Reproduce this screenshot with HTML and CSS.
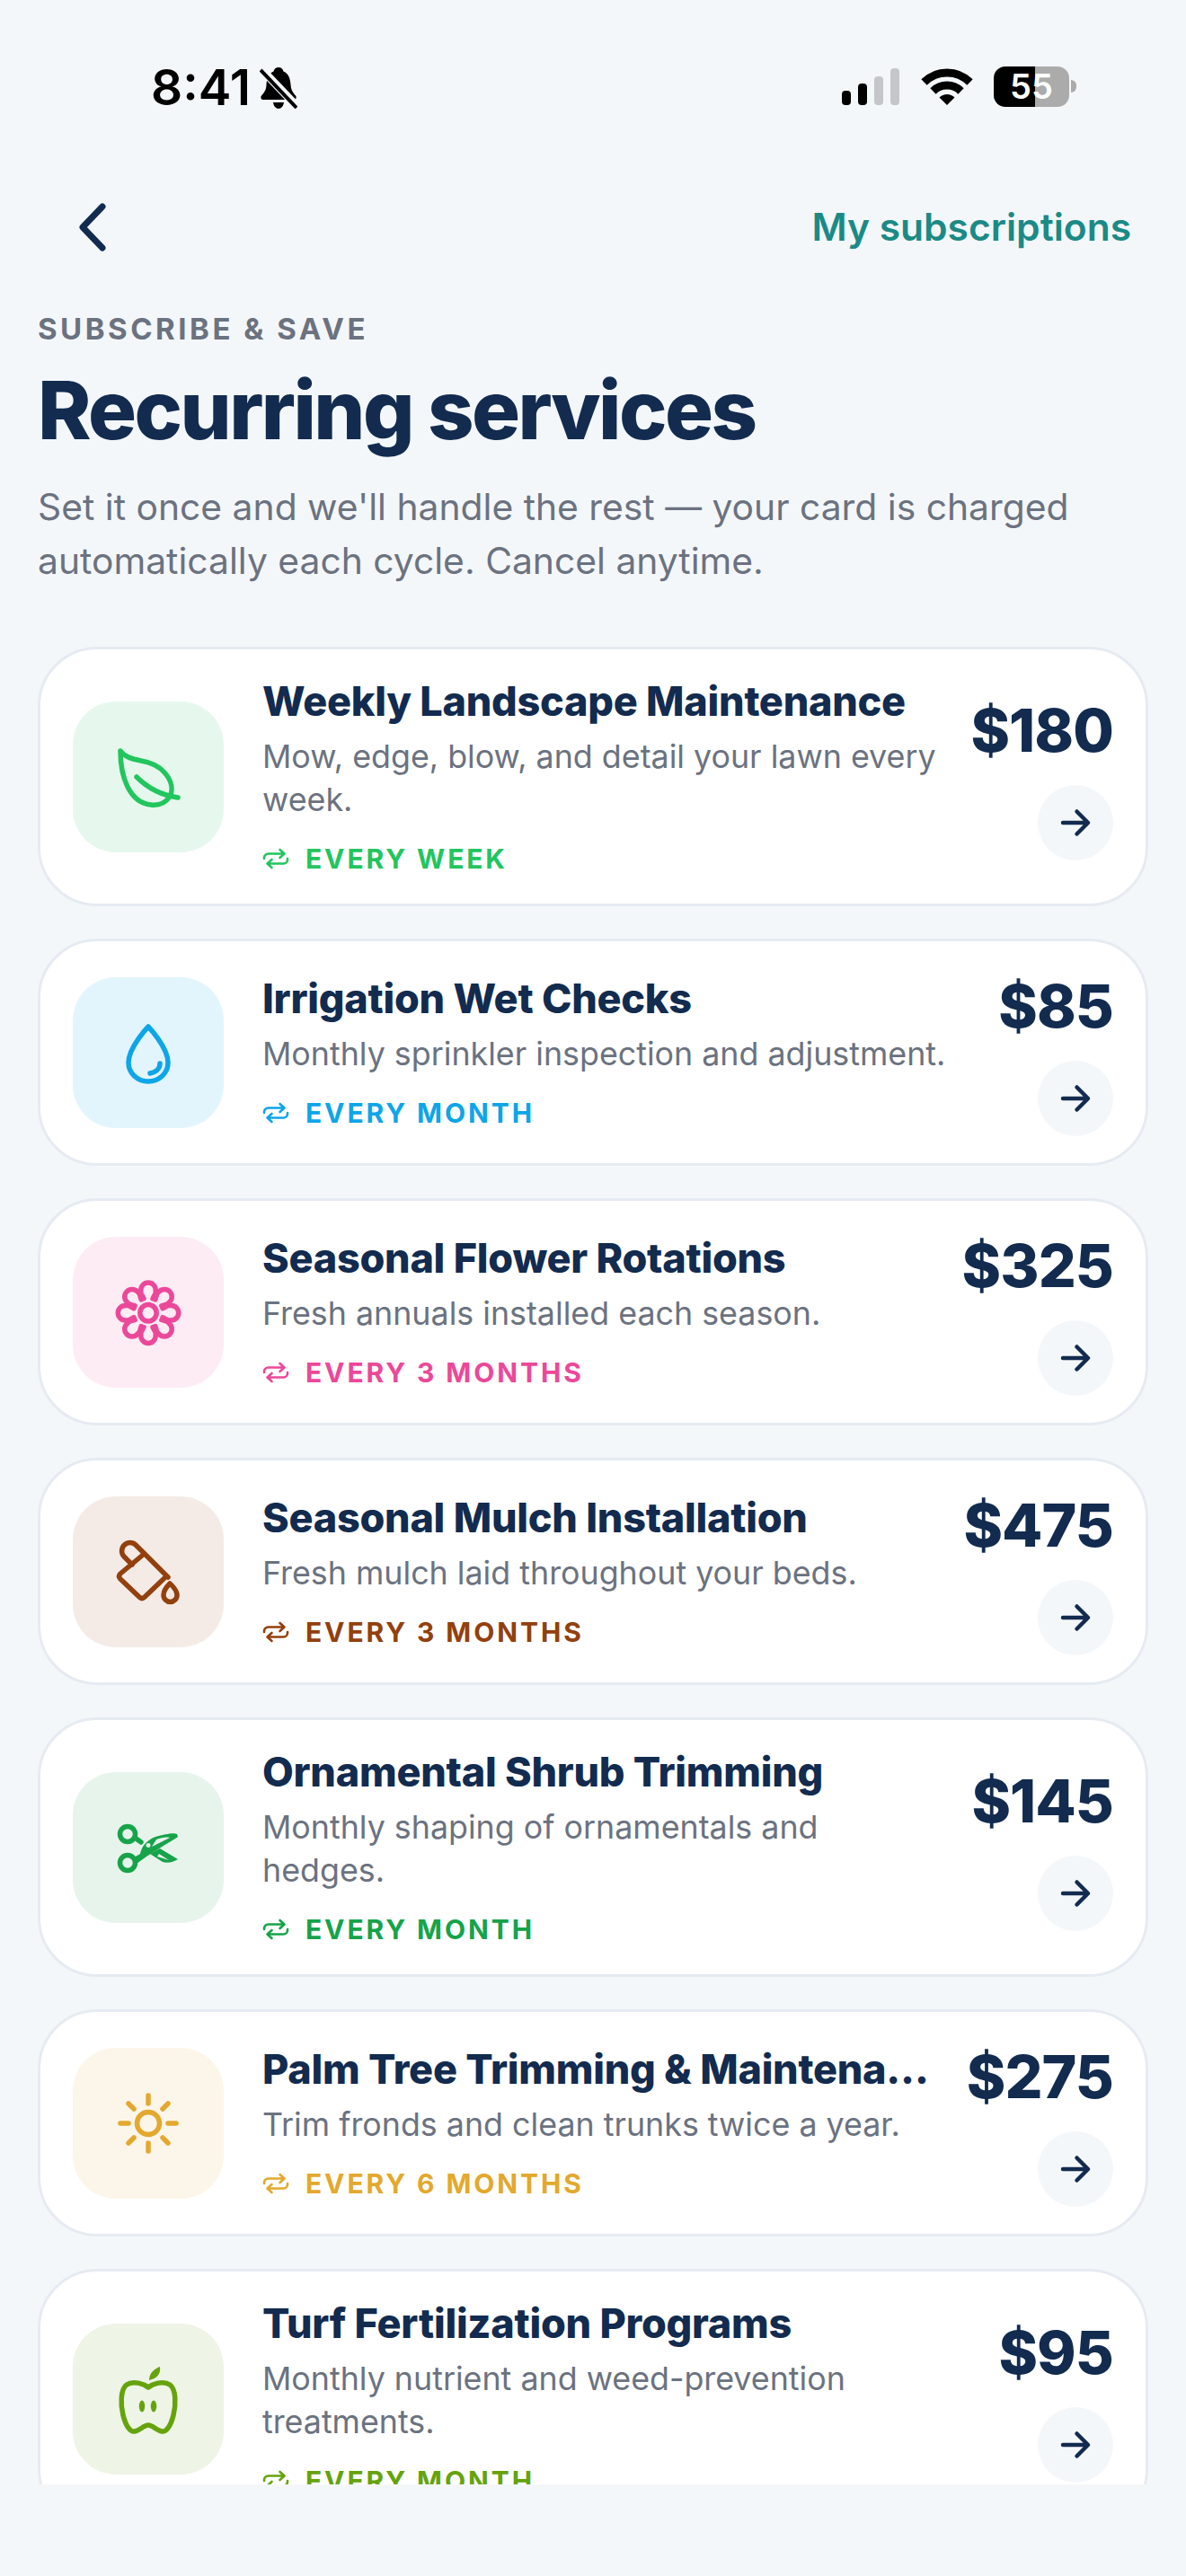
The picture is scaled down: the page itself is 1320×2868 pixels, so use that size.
FILE: index.html
```html
<!DOCTYPE html>
<html lang="en">
<head>
<meta charset="utf-8">
<title>Recurring services</title>
<link rel="stylesheet" href="styles.css">
</head>
<body>
<svg class="defs" width="0" height="0" aria-hidden="true">
  <defs>
    <g id="repeat"><path d="M2 12V11a4.500 4.500 0 0 1 4.500-4.500H24M19.500 2l5 4.500-5 4.500M28 12v1a4.500 4.500 0 0 1-4.500 4.500H6M10.500 13l-5 4.500 5 4.500"/></g>
    <g id="arrow"><path d="M7 21h27M22.500 8.500 35 21 22.500 33.500"/></g>
    <path id="petal" d="M-5-16-8.200-22V-25.500A8.200 8.200 0 0 1 8.200-25.500V-22L5-16"/>
  </defs>
</svg>
<div class="page">
  <div class="status">
    <div class="status-left">
      <span class="time">8:41</span>
      <svg class="bell" viewBox="0 0 42 46" width="42" height="46"><path class="bell-body" d="M21 0c3 0 5 2 5.500 4.500C32 7 34 12 34.500 19c.3 6 2.500 9 5.500 12.500 1.500 2 .5 4.500-2 4.500H4c-2.500 0-3.500-2.500-2-4.500C5 28 7.500 25 7.500 19 8 12 10 7 15.500 4.500 16 2 18 0 21 0ZM15 39h12c-.5 4-3 7-6 7s-5.500-3-6-7Z"/><path class="bell-gap" d="M0 0 42 44"/><path class="bell-slash" d="M1 3 41 45"/></svg>
    </div>
    <div class="status-right">
      <div class="signal"><i class="b1"></i><i class="b2"></i><i class="b3"></i><i class="b4"></i></div>
      <svg class="wifi" viewBox="0 0 58 41" width="58" height="41"><path d="M3.500 15.500A36 36 0 0 1 54.500 15.500M13.500 25.500A22 22 0 0 1 44.500 25.500" fill="none" stroke="#000" stroke-width="9"/><path d="M29 41 20.500 32.500A12 12 0 0 1 37.500 32.500Z" fill="#000"/></svg>
      <div class="battery"><span class="battery-level">55</span><i class="battery-nub"></i></div>
    </div>
  </div>

  <div class="nav">
    <svg class="back" viewBox="0 0 32 54" width="32" height="54"><path d="M28 4 6 27l22 23"/></svg>
    <a class="nav-link">My subscriptions</a>
  </div>

  <header class="head">
    <div class="eyebrow">SUBSCRIBE &amp; SAVE</div>
    <h1 class="title">Recurring services</h1>
    <p class="lede">Set it once and we'll handle the rest — your card is charged automatically each cycle. Cancel anytime.</p>
  </header>

  <main class="list">
    <article class="card c-green">
      <div class="tile"><svg class="ico" viewBox="0 0 168 168"><path d="M53 55C58 62 66 64 76 66 88 68 96 72 102 79 110 88 112 98 108 106 103 113 95 116 87 115 76 114 67 107 61 95 55 83 53 68 53 55Z"/><path d="M71 84C82 95 96 104 117 107"/></svg></div>
      <div class="body">
        <h2 class="name">Weekly Landscape Maintenance</h2>
        <p class="desc">Mow, edge, blow, and detail your lawn every week.</p>
        <div class="freq"><svg class="rep" viewBox="0 0 30 24"><use href="#repeat"/></svg><span>EVERY WEEK</span></div>
      </div>
      <div class="side"><div class="price">$180</div><div class="go"><svg viewBox="0 0 42 42"><use href="#arrow"/></svg></div></div>
    </article>

    <article class="card c-blue">
      <div class="tile"><svg class="ico" viewBox="0 0 168 168"><path d="M84 55C84 55 62 78 62 95 62 107 72 116 84 116 96 116 106 107 106 95 106 78 84 55 84 55Z"/><path d="M97 96C97 102 92 106 86 107"/></svg></div>
      <div class="body">
        <h2 class="name">Irrigation Wet Checks</h2>
        <p class="desc">Monthly sprinkler inspection and adjustment.</p>
        <div class="freq"><svg class="rep" viewBox="0 0 30 24"><use href="#repeat"/></svg><span>EVERY MONTH</span></div>
      </div>
      <div class="side"><div class="price">$85</div><div class="go"><svg viewBox="0 0 42 42"><use href="#arrow"/></svg></div></div>
    </article>

    <article class="card c-pink">
      <div class="tile"><svg class="ico" viewBox="0 0 168 168"><g transform="translate(84 84.700)"><circle r="9.200"/><use href="#petal"/><use href="#petal" transform="rotate(45)"/><use href="#petal" transform="rotate(90)"/><use href="#petal" transform="rotate(135)"/><use href="#petal" transform="rotate(180)"/><use href="#petal" transform="rotate(225)"/><use href="#petal" transform="rotate(270)"/><use href="#petal" transform="rotate(315)"/></g></svg></div>
      <div class="body">
        <h2 class="name">Seasonal Flower Rotations</h2>
        <p class="desc">Fresh annuals installed each season.</p>
        <div class="freq"><svg class="rep" viewBox="0 0 30 24"><use href="#repeat"/></svg><span>EVERY 3 MONTHS</span></div>
      </div>
      <div class="side"><div class="price">$325</div><div class="go"><svg viewBox="0 0 42 42"><use href="#arrow"/></svg></div></div>
    </article>

    <article class="card c-brown">
      <div class="tile"><svg class="ico" viewBox="0 0 168 168"><path d="M106 90 70 54A9.200 9.200 0 0 0 57 67L66 76"/><path d="M77 66 53 86Q50 89 53 92L74 112Q77 115 80 112L102 91"/><path d="M108 97C108 97 101 104 101 110A7.500 7.500 0 0 0 116 110C116 104 108 97 108 97Z"/></svg></div>
      <div class="body">
        <h2 class="name">Seasonal Mulch Installation</h2>
        <p class="desc">Fresh mulch laid throughout your beds.</p>
        <div class="freq"><svg class="rep" viewBox="0 0 30 24"><use href="#repeat"/></svg><span>EVERY 3 MONTHS</span></div>
      </div>
      <div class="side"><div class="price">$475</div><div class="go"><svg viewBox="0 0 42 42"><use href="#arrow"/></svg></div></div>
    </article>

    <article class="card c-forest">
      <div class="tile"><svg class="ico" viewBox="0 0 168 168"><circle cx="61" cy="69" r="8.500"/><circle cx="61" cy="101" r="8.500"/><path d="M69 73 76 78"/><path class="solid" fill-rule="evenodd" d="M68 95 75 91C77 82 82 76 92 72 102 69 113 67 116 69L117 72C105 80 85 91 71 102ZM93 75 88 83 96 79 108 73C104 72 98 73 93 75ZM84 79A2.500 2.500 0 1 0 84.100 79Z"/><path class="solid" fill-rule="evenodd" d="M86 91 97 85 117 97C112 100 106 102 100 100ZM96 91 94 94 107 98Z"/></svg></div>
      <div class="body">
        <h2 class="name">Ornamental Shrub Trimming</h2>
        <p class="desc">Monthly shaping of ornamentals and hedges.</p>
        <div class="freq"><svg class="rep" viewBox="0 0 30 24"><use href="#repeat"/></svg><span>EVERY MONTH</span></div>
      </div>
      <div class="side"><div class="price">$145</div><div class="go"><svg viewBox="0 0 42 42"><use href="#arrow"/></svg></div></div>
    </article>

    <article class="card c-gold">
      <div class="tile"><svg class="ico" viewBox="0 0 168 168"><circle cx="84" cy="84" r="12.500"/><path d="M84 53v9M84 106v9M53 84h9M106 84h9M62 62l6 6M100 100l6 6M62 106l6-6M100 68l6-6"/></svg></div>
      <div class="body">
        <h2 class="name">Palm Tree Trimming &amp; Maintenance Program</h2>
        <p class="desc">Trim fronds and clean trunks twice a year.</p>
        <div class="freq"><svg class="rep" viewBox="0 0 30 24"><use href="#repeat"/></svg><span>EVERY 6 MONTHS</span></div>
      </div>
      <div class="side"><div class="price">$275</div><div class="go"><svg viewBox="0 0 42 42"><use href="#arrow"/></svg></div></div>
    </article>

    <article class="card c-olive">
      <div class="tile"><svg class="ico" viewBox="0 0 168 168"><path d="M84 71C79 67 67 63 60 68 53 73 53 90 56 102 59 114 64 121 69 120 75 119 79 113 84 113 89 113 93 119 99 120 104 121 109 114 112 102 115 90 115 73 108 68 101 63 89 67 84 71Z"/><ellipse class="solid" cx="77" cy="92" rx="3.200" ry="6.500"/><ellipse class="solid" cx="90" cy="92" rx="3.200" ry="6.500"/><path class="solid" d="M85 63C85 54 92 50 97 48 98 56 94 61 85 63Z"/></svg></div>
      <div class="body">
        <h2 class="name">Turf Fertilization Programs</h2>
        <p class="desc">Monthly nutrient and weed-prevention treatments.</p>
        <div class="freq"><svg class="rep" viewBox="0 0 30 24"><use href="#repeat"/></svg><span>EVERY MONTH</span></div>
      </div>
      <div class="side"><div class="price">$95</div><div class="go"><svg viewBox="0 0 42 42"><use href="#arrow"/></svg></div></div>
    </article>
  </main>
  <div class="foot"></div>
</div>
</body>
</html>
```

FILE: styles.css
```css
* { box-sizing: border-box; }
html, body { margin: 0; padding: 0; }
body { background: #f4f7fa; font-family: "Inter", "Liberation Sans", sans-serif; color: #122b4f; }
.defs { position: absolute; }
.page { height: 2868px; display: flex; flex-direction: column; overflow: hidden; }

.status { height: 198px; padding: 74px 130px 0 168px; display: flex; justify-content: space-between; align-items: flex-start; color: #000; }
.status-left { display: flex; align-items: center; gap: 10px; height: 47px; }
.time { font-size: 55px; line-height: 47px; font-weight: 600; letter-spacing: 0; }
.bell { display: block; }
.bell-body { fill: #000; }
.bell-gap { stroke: #f4f7fa; stroke-width: 9; }
.bell-slash { stroke: #000; stroke-width: 4; }
.status-right { display: flex; align-items: flex-start; gap: 0; }
.signal { display: flex; align-items: flex-end; gap: 8px; width: 65px; height: 41px; margin: 2px 23px 0 0; }
.signal i { display: block; width: 10px; border-radius: 4px; background: #000; }
.signal .b1 { height: 16px; }
.signal .b2 { height: 24px; }
.signal .b3 { height: 32px; background: #c4c6ca; }
.signal .b4 { height: 41px; background: #c4c6ca; }
.wifi { display: block; margin: 2px 23px 0 0; }
.battery { position: relative; width: 84px; height: 45px; border-radius: 13px; background: linear-gradient(90deg, #000 0 46px, #ababab 46px); display: flex; align-items: center; justify-content: center; }
.battery-level { color: #fff; font-size: 38px; line-height: 45px; font-weight: 600; }
.battery-nub { position: absolute; left: 86px; top: 15px; width: 6px; height: 14px; border-radius: 0 6px 6px 0; background: #ababab; }

.nav { height: 116px; padding: 0 61px 0 86px; display: flex; justify-content: space-between; align-items: center; }
.back { display: block; margin-top: -6px; }
.back path { fill: none; stroke: #122b4f; stroke-width: 7; stroke-linecap: round; stroke-linejoin: round; }
.nav-link { font-size: 42.500px; line-height: 60px; font-weight: 600; color: #1b8a86; margin-top: -6px; }

.head { padding: 0 42px; margin-top: 31px; }
.eyebrow { font-size: 33px; line-height: 42px; font-weight: 700; letter-spacing: 3.500px; color: #6b7280; }
.title { margin: 19px 0 0; font-size: 90px; line-height: 102px; font-weight: 800; letter-spacing: -2.550px; color: #122b4f; }
.lede { margin: 26px 0 0; font-size: 40.800px; line-height: 60px; color: #6b7280; }

.list { flex: 1 1 0; min-height: 0; overflow: hidden; padding: 0 42px; margin-top: 66px; display: flex; flex-direction: column; gap: 36px; }
.foot { flex: 0 0 102px; }

.card { flex: none; display: flex; align-items: center; gap: 43px; padding: 33px 36px; background: #fff; border: 3px solid #e6ebf2; border-radius: 66px; }
.tile { flex: none; width: 168px; height: 168px; border-radius: 48px; display: flex; align-items: center; justify-content: center; }
.ico { display: block; width: 168px; height: 168px; fill: none; stroke: currentColor; stroke-width: 5.500; stroke-linecap: round; stroke-linejoin: round; }
.ico use { stroke: currentColor; }
.ico .solid { fill: currentColor; stroke: none; }
.body { flex: 1 1 0; min-width: 0; }
.name { margin: -4px 0; font-size: 45px; line-height: 58px; font-weight: 800; letter-spacing: -0.250px; color: #122b4f; white-space: nowrap; overflow: hidden; text-overflow: ellipsis; }
.desc { margin: 12px 0 0; font-size: 35.800px; line-height: 48px; color: #6b7280; }
.freq { margin-top: 25px; height: 34px; display: flex; align-items: center; gap: 18px; font-size: 30px; line-height: 34px; font-weight: 700; letter-spacing: 2.900px; color: currentColor; }
.rep { flex: none; display: block; width: 30px; height: 24px; fill: none; stroke: currentColor; stroke-width: 2.600; stroke-linecap: round; stroke-linejoin: round; }
.side { flex: none; display: flex; flex-direction: column; align-items: flex-end; gap: 21px; margin: 0 0 -3px -8px; }
.price { font-size: 66px; line-height: 79px; font-weight: 800; letter-spacing: -0.900px; color: #122b4f; }
.go { width: 84px; height: 84px; border-radius: 50%; background: #f4f7fa; display: flex; align-items: center; justify-content: center; }
.go svg { display: block; width: 42px; height: 42px; fill: none; stroke: #122b4f; stroke-width: 4.500; stroke-linecap: round; stroke-linejoin: round; }

.c-green { color: #22c55e; } .c-green .tile { background: #e6f8ed; }
.c-blue { color: #0ea5e9; } .c-blue .tile { background: #e3f5fc; }
.c-pink { color: #ec4899; } .c-pink .tile { background: #fdecf4; }
.c-brown { color: #92400e; } .c-brown .tile { background: #f4ebe6; }
.c-forest { color: #16a34a; } .c-forest .tile { background: #e7f4ec; }
.c-gold { color: #e3a82d; } .c-gold .tile { background: #fcf5e9; }
.c-olive { color: #65a30d; } .c-olive .tile { background: #eef4e6; }
```
